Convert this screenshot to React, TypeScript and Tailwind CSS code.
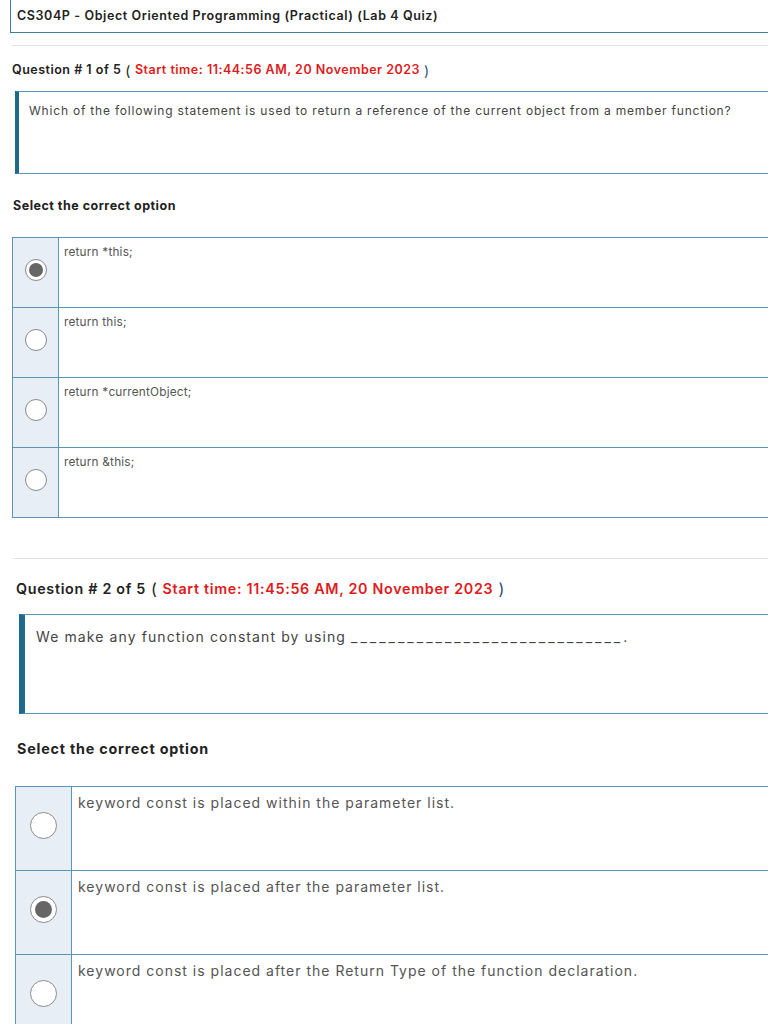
import React from 'react';

const q1Options = ['return *this;', 'return this;', 'return *currentObject;', 'return &this;'];
const q2Options = [
  'keyword const is placed within the parameter list.',
  'keyword const is placed after the parameter list.',
  'keyword const is placed after the Return Type of the function declaration.',
];

const Radio = ({ checked, big }: { checked: boolean; big?: boolean }) => (
  <div
    className={`rounded-full border border-[#8a8a8a] bg-white flex items-center justify-center ${
      big ? 'w-[27px] h-[27px]' : 'w-[22px] h-[22px]'
    }`}
  >
    {checked && <div className={`rounded-full bg-[#666] ${big ? 'w-[17px] h-[17px]' : 'w-[14px] h-[14px]'}`} />}
  </div>
);

export default function App() {
  return (
    <div className="w-[768px] h-[1024px] overflow-hidden bg-white font-['Inter','Liberation_Sans',sans-serif]">
      {/* header */}
      <div className="ml-[10px] h-[33px] border-l border-b border-[#3d7f9c] flex items-center pl-[6px] text-[12.5px] font-semibold text-[#222] tracking-[0.6px]">
        CS304P - Object Oriented Programming (Practical) (Lab 4 Quiz)
      </div>
      <div className="ml-[12px] mt-[12px] border-t border-[#e3e3e3]" />

      {/* question 1 */}
      <div className="ml-[12px] mt-[14px] h-[20px] flex items-center text-[12.5px] font-semibold text-[#222] tracking-[0.5px]">
        Question # 1 of 5 <span className="mx-[4px] text-[14px] font-normal">(</span>
        <span className="text-[#e01b1b]">Start time: 11:44:56 AM, 20 November 2023</span>
        <span className="ml-[4px] text-[14px] font-normal text-[#1f4e79]">)</span>
      </div>
      <div className="ml-[15px] mt-[11px] h-[83px] border-t border-b border-[#5b95b5] border-l-[4px] border-l-[#1d6a8a] pl-[10px] pt-[11px]">
        <p className="text-[12px] leading-[16px] text-[#444] tracking-[0.8px]">
          Which of the following statement is used to return a reference of the current object from a member function?
        </p>
      </div>
      <div className="ml-[13px] mt-[22px] h-[20px] flex items-center text-[12.5px] font-bold text-[#222] tracking-[0.5px]">
        Select the correct option
      </div>
      <div className="ml-[12px] mt-[21px] border-t border-l border-[#5b95b5]">
        {q1Options.map((o, i) => (
          <div key={o} className="flex h-[70px] border-b border-[#5b95b5]">
            <div className="w-[46px] bg-[#e8eef6] border-r border-[#5b95b5] flex justify-center pt-[21px]">
              <Radio checked={i === 0} />
            </div>
            <div className="flex-1 pl-[5px] pt-[6px] text-[11.8px] leading-[16px] text-[#555] tracking-[0.2px]">{o}</div>
          </div>
        ))}
      </div>

      <div className="ml-[13px] mt-[40px] border-t border-[#e3e3e3]" />

      {/* question 2 */}
      <div className="ml-[16px] mt-[18px] h-[24px] flex items-center text-[14.3px] font-semibold text-[#222] tracking-[0.7px]">
        Question # 2 of 5 <span className="mx-[5px] text-[16px] font-normal">(</span>
        <span className="text-[#e01b1b]">Start time: 11:45:56 AM, 20 November 2023</span>
        <span className="ml-[5px] text-[16px] font-normal text-[#1f4e79]">)</span>
      </div>
      <div className="ml-[19px] mt-[13px] h-[100px] border-t border-b border-[#5b95b5] border-l-[6px] border-l-[#1d6a8a] pl-[11px] pt-[13px]">
        <p className="text-[14px] leading-[18px] text-[#444] tracking-[1.1px]">
          We make any function constant by using{' '}
          <span className="tracking-[3px]">_____________________________</span>.
        </p>
      </div>
      <div className="ml-[17px] mt-[23px] h-[24px] flex items-center text-[14.3px] font-bold text-[#222] tracking-[0.8px]">
        Select the correct option
      </div>
      <div className="ml-[15px] mt-[25px] border-t border-l border-[#5b95b5]">
        {q2Options.map((o, i) => (
          <div key={o} className="flex h-[84px] border-b border-[#5b95b5]">
            <div className="w-[56px] bg-[#e8eef6] border-r border-[#5b95b5] flex justify-center pt-[25px]">
              <Radio checked={i === 1} big />
            </div>
            <div className="flex-1 pl-[6px] pt-[7px] text-[14px] leading-[18px] text-[#555] tracking-[1px]">{o}</div>
          </div>
        ))}
      </div>
    </div>
  );
}
